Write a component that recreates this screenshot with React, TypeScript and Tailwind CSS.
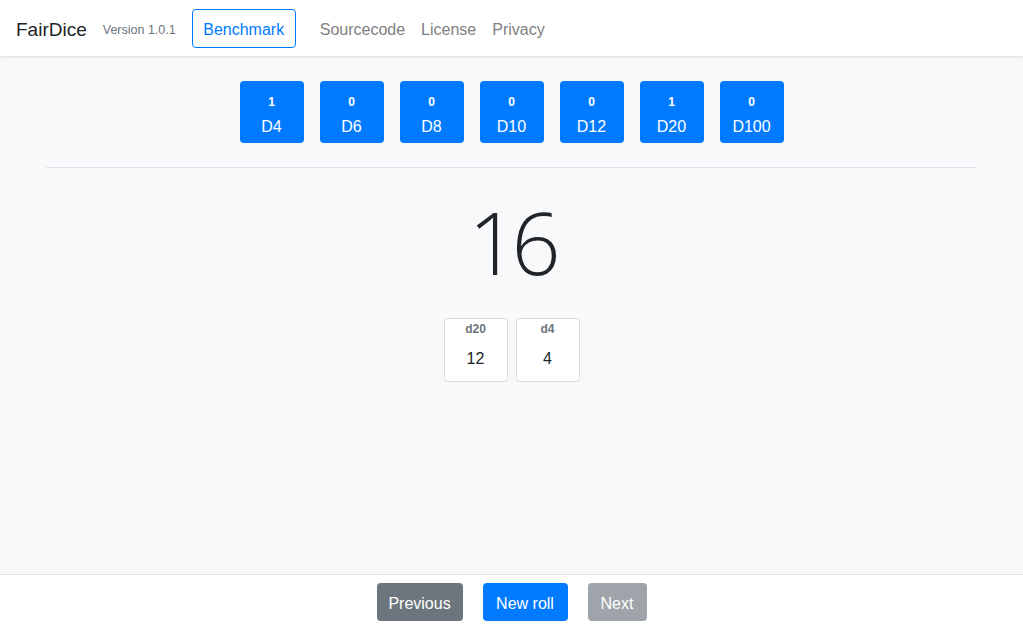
import React from "react";

const dice = [
  { count: 1, name: "D4" },
  { count: 0, name: "D6" },
  { count: 0, name: "D8" },
  { count: 0, name: "D10" },
  { count: 0, name: "D12" },
  { count: 1, name: "D20" },
  { count: 0, name: "D100" },
];

const results = [
  { die: "d20", value: 12 },
  { die: "d4", value: 4 },
];

const App = () => {
  return (
    <div
      className="h-[628px] flex flex-col bg-[#f8f9fa] text-[#212529]"
      style={{ fontFamily: '"Liberation Sans", Arial, sans-serif' }}
    >
      <nav className="h-[56px] shrink-0 bg-white flex items-center px-4 shadow-[0_1px_3px_rgba(0,0,0,0.12)] relative z-10">
        <span className="text-[19px] text-[#212529] mr-4 pt-1">FairDice</span>
        <span className="text-[12.5px] text-[#6c757d] mr-4 pt-1">Version 1.0.1</span>
        <button className="h-[39px] w-[104px] pt-[3px] border border-[#007bff] text-[#007bff] rounded text-[16px] mr-4">
          Benchmark
        </button>
        <div className="flex gap-4 text-[16px] text-[#808080] pt-1">
          <span className="ml-2">Sourcecode</span>
          <span>License</span>
          <span>Privacy</span>
        </div>
      </nav>

      <main className="flex-1 flex flex-col items-center">
        <div className="w-[931px] flex flex-col items-center">
          <div className="flex gap-4 mt-[25px]">
            {dice.map((d) => (
              <button
                key={d.name}
                className="w-[64px] h-[62px] bg-[#007bff] text-white rounded flex flex-col items-center pt-[15px]"
              >
                <span className="text-[12px] font-bold leading-none mb-[11px]">{d.count}</span>
                <span className="text-[16px] leading-none">{d.name}</span>
              </button>
            ))}
          </div>
          <hr className="w-full border-t border-[#dee2e6] mt-[24px]" />
          <div
            className="text-[86px] font-light leading-none mt-[31px] tracking-[-0.07em] text-[#212529]"
            style={{ fontFamily: '"Open Sans", "Liberation Sans", sans-serif' }}
          >
            16
          </div>
          <div className="flex gap-2 mt-[33px]">
            {results.map((r) => (
              <div
                key={r.die}
                className="w-[64px] h-[64px] bg-white border border-[#dcdcdc] rounded flex flex-col items-center"
              >
                <span className="text-[12px] font-bold text-[#6c757d] mt-[1px]">{r.die}</span>
                <span className="text-[16px] mt-[9px]">{r.value}</span>
              </div>
            ))}
          </div>
        </div>
      </main>

      <footer className="h-[54px] shrink-0 bg-white border-t border-[#dee2e6] flex items-center justify-center gap-5">
        <button className="h-[38px] w-[86px] pt-[4px] rounded bg-[#6c757d] text-white text-[16px]">Previous</button>
        <button className="h-[38px] w-[85px] pt-[4px] rounded bg-[#007bff] text-white text-[16px]">New roll</button>
        <button className="h-[38px] w-[59px] pt-[4px] rounded bg-[#6c757d] opacity-65 text-white text-[16px]">Next</button>
      </footer>
    </div>
  );
};

export default App;
